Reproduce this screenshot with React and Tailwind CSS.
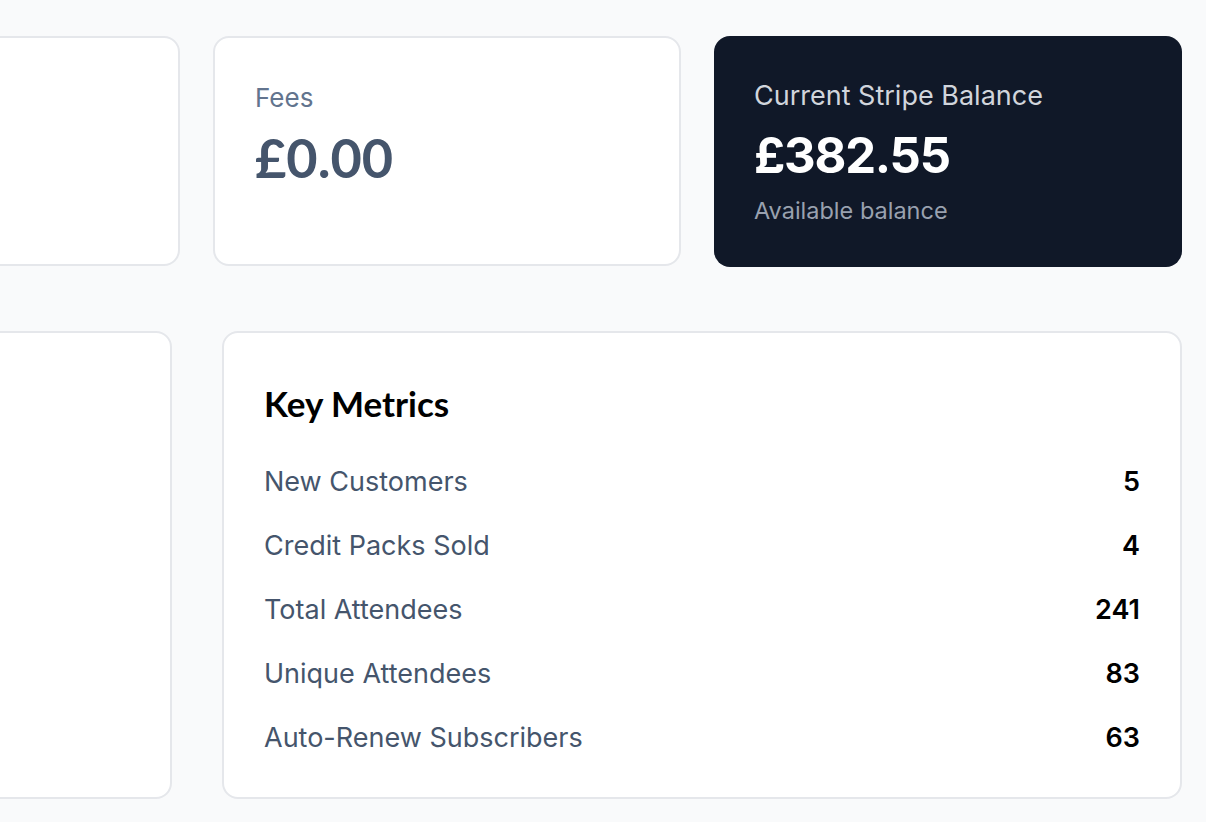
import React from 'react';

const metrics = [
  { label: 'New Customers', value: '5' },
  { label: 'Credit Packs Sold', value: '4' },
  { label: 'Total Attendees', value: '241' },
  { label: 'Unique Attendees', value: '83' },
  { label: 'Auto-Renew Subscribers', value: '63' },
];

const inter = { fontFamily: 'Inter, "Noto Sans", sans-serif' };

const App = () => {
  return (
    <div className="min-h-screen bg-gray-50 overflow-hidden pt-9 pr-6 font-['Inter','Noto_Sans',sans-serif]">
      {/* Summary cards */}
      <div className="flex gap-[33px]">
        <div className="-ml-10 flex-1 min-w-0 h-[230px] rounded-2xl border-2 border-gray-200 bg-white" />

        <div className="w-[468px] shrink-0 h-[230px] rounded-2xl border-2 border-gray-200 bg-white pl-10 pt-[42px]">
          <p className="text-[26px] leading-9 text-slate-500">Fees</p>
          <p className="mt-3 text-[54px] leading-[60px] font-bold text-slate-600 font-['Lato',sans-serif]">£0.00</p>
        </div>

        <div className="w-[468px] shrink-0 h-[231px] rounded-2xl bg-gray-900 pl-10 pt-[42px]">
          <p className="text-[27px] leading-9 text-gray-300">Current Stripe Balance</p>
          <p className="mt-3 text-[49px] leading-[60px] font-bold text-white tracking-tight">£382.55</p>
          <p className="mt-[9px] text-[23.5px] leading-8 text-gray-400">Available balance</p>
        </div>
      </div>

      {/* Lower panels */}
      <div className="mt-16 flex gap-[50px]">
        <div className="-ml-10 flex-1 min-w-0 h-[468px] rounded-2xl border-2 border-gray-200 bg-white" />

        <div className="w-[960px] shrink-0 h-[468px] rounded-2xl border-2 border-gray-200 bg-white pl-10 pr-10 pt-[50px]">
          <h4 className="text-[35px] leading-10 font-bold text-black font-['Lato',sans-serif]">Key Metrics</h4>
          <div className="mt-[27px]">
            {metrics.map((m) => (
              <div key={m.label} className="flex h-16 items-center justify-between" style={inter}>
                <span className="text-[27px] text-slate-600">{m.label}</span>
                <span className="text-[27px] font-semibold text-black">{m.value}</span>
              </div>
            ))}
          </div>
        </div>
      </div>
    </div>
  );
};

export default App;
